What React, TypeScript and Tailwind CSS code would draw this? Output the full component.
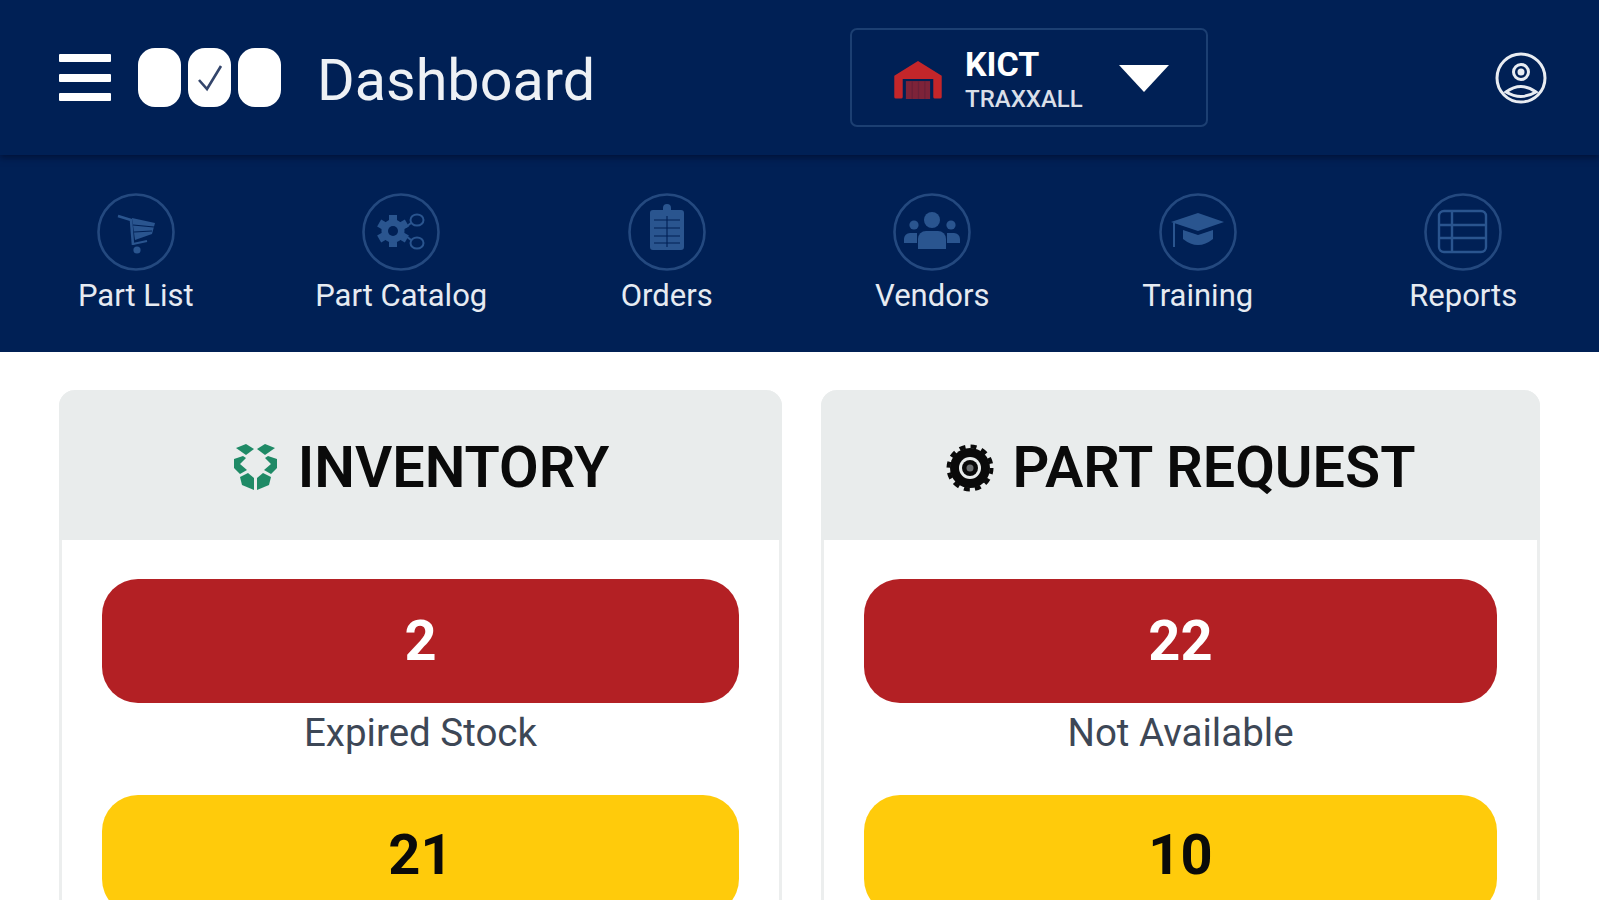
import React from 'react';

const NAVY = '#002055';
const ICON = '#2a558f';

const CartIcon = () => (
  <g>
    <path d="M21 23 L34 27 L36 52" fill="none" stroke={ICON} strokeWidth="2.6" />
    <path d="M35 25 L58 30 L55 41 L38 47Z" fill={ICON} />
    <path d="M36 32 L57 34 M37 39 L55 38" stroke={NAVY} strokeWidth="1.2" />
    <path d="M36 51 L50 48" stroke={ICON} strokeWidth="2" />
    <circle cx="40" cy="57" r="3.6" fill={ICON} />
  </g>
);

const CatalogIcon = () => (
  <g>
    {[0, 60, 120, 180, 240, 300].map((deg) => (
      <rect key={deg} x="27" y="22" width="8" height="8" fill={ICON} transform={`rotate(${deg} 31 38)`} />
    ))}
    <circle cx="31" cy="38" r="11.5" fill={ICON} />
    <circle cx="31" cy="38" r="5" fill={NAVY} />
    <ellipse cx="55" cy="27" rx="6.5" ry="5.5" fill="none" stroke={ICON} strokeWidth="2" />
    <ellipse cx="55" cy="50" rx="6.5" ry="5.5" fill="none" stroke={ICON} strokeWidth="2" />
    <path d="M44 34 L49 30 M44 43 L49 47" stroke={ICON} strokeWidth="2" />
  </g>
);

const OrdersIcon = () => (
  <g>
    <path d="M35 17 V15 a4 4 0 0 1 8 0 V17 H53 a3 3 0 0 1 3 3 V54 a3 3 0 0 1 -3 3 H25 a3 3 0 0 1 -3 -3 V20 a3 3 0 0 1 3 -3Z" fill={ICON} />
    <path d="M26 27 H52 M26 35 H52 M26 43 H52 M26 50 H52 M39 23 V54" stroke={NAVY} strokeWidth="1.1" />
  </g>
);

const VendorsIcon = () => (
  <g fill={ICON}>
    <circle cx="39" cy="27" r="8" />
    <path d="M25 56 V46 a8 8 0 0 1 8 -8 H45 a8 8 0 0 1 8 8 V56Z" />
    <circle cx="21" cy="32" r="4.6" />
    <circle cx="58" cy="32" r="4.6" />
    <path d="M11 50 V46 a6 6 0 0 1 6 -6 H24 V50Z M67 50 V46 a6 6 0 0 0 -6 -6 H54 V50Z" />
  </g>
);

const TrainingIcon = () => (
  <g>
    <path d="M39 20 L65 29 L39 38 L12 29Z" fill={ICON} />
    <path d="M24 37 L39 42 L54 37 V46 Q39 58 24 46Z" fill={ICON} />
    <path d="M15 30 V54" stroke={ICON} strokeWidth="2" />
  </g>
);

const ReportsIcon = () => (
  <g fill="none" stroke={ICON} strokeWidth="2.4">
    <rect x="15" y="18" width="47" height="41" rx="5" />
    <path d="M28 18 V59 M15 32 H62 M15 45 H62" />
  </g>
);

const navItems = [
  { label: 'Part List', icon: <CartIcon /> },
  { label: 'Part Catalog', icon: <CatalogIcon /> },
  { label: 'Orders', icon: <OrdersIcon /> },
  { label: 'Vendors', icon: <VendorsIcon /> },
  { label: 'Training', icon: <TrainingIcon /> },
  { label: 'Reports', icon: <ReportsIcon /> },
];

const cards = [
  { title: 'INVENTORY', icon: 'box', red: '2', label: 'Expired Stock', yellow: '21' },
  { title: 'PART REQUEST', icon: 'gear', red: '22', label: 'Not Available', yellow: '10' },
];

const BoxIcon = () => (
  <svg width="47" height="47" viewBox="0 0 47 47" className="shrink-0">
    <g fill="#1f8a66">
      <path d="M4 4 L14 0 L22 5 L14 11Z" />
      <path d="M43 4 L33 0 L25 5 L33 11Z" />
      <path d="M2 15 L11 12 L14 14 L8 20 L15 26 L8 30 L2 24Z" />
      <path d="M45 15 L36 12 L33 14 L39 20 L32 26 L39 30 L45 24Z" />
      <path d="M8 33 L16 29 L22 34 L22 46 L10 41Z" />
      <path d="M39 33 L31 29 L25 34 L25 46 L37 41Z" />
    </g>
  </svg>
);

const CogIcon = () => (
  <svg width="48" height="48" viewBox="0 0 48 48" className="shrink-0">
    <circle cx="24" cy="24" r="21.5" fill="none" stroke="#0a0a0a" strokeWidth="4" strokeDasharray="6 5.25" />
    <circle cx="24" cy="24" r="20" fill="#0a0a0a" />
    <circle cx="24" cy="24" r="11" fill="#e9ecec" />
    <circle cx="24" cy="24" r="8" fill="#0a0a0a" />
    <circle cx="24" cy="24" r="3.5" fill="#6b6e70" />
  </svg>
);

export default function App() {
  return (
    <div className="h-[900px] overflow-hidden bg-white font-['Roboto',sans-serif]">
      {/* top bar */}
      <div className="h-[155px] bg-[#002055] flex items-center pl-[59px] pr-[52px] shadow-[0_3px_6px_rgba(0,10,40,0.6)] relative z-10">
        <div className="w-[52px] h-[47px] flex flex-col justify-between shrink-0">
          <div className="h-[8px] bg-white rounded-[1px]" />
          <div className="h-[8px] bg-white rounded-[1px]" />
          <div className="h-[8px] bg-white rounded-[1px]" />
        </div>
        <div className="ml-[27px] flex gap-[7px] shrink-0">
          <div className="w-[43px] h-[59px] bg-white rounded-[17px]" />
          <div className="w-[43px] h-[59px] bg-white rounded-[17px] flex items-center justify-center">
            <svg width="26" height="28" viewBox="0 0 26 28">
              <path d="M2 16 L10 25 L24 2" fill="none" stroke="#33456b" strokeWidth="2.6" />
            </svg>
          </div>
          <div className="w-[43px] h-[59px] bg-white rounded-[17px]" />
        </div>
        <div className="ml-[36px] mt-[6px] text-[57.5px] leading-none text-[#eef1f5] w-[276px] shrink-0">Dashboard</div>
        <div className="ml-[257px] w-[358px] h-[99px] border-[2px] border-[#1c3f72] rounded-[7px] flex items-center pl-[41px] shrink-0">
          <svg width="50" height="39" viewBox="0 0 47 37" className="shrink-0 mt-[3px]">
            <path d="M23.5 1 L46 15 V35 a1.5 1.5 0 0 1 -1.5 1.5 H39.5 a1.5 1.5 0 0 1 -1.5 -1.5 V18 H9 V35 a1.5 1.5 0 0 1 -1.5 1.5 H2.5 a1.5 1.5 0 0 1 -1.5 -1.5 V15Z" fill="#c4262a" />
            <rect x="12" y="20" width="23" height="17" fill="#7d2339" />
            <path d="M18 20 V37 M24 20 V37 M30 20 V37" stroke="#6b2038" strokeWidth="1.2" />
          </svg>
          <div className="ml-[22px] w-[154px] shrink-0 mt-[3px]">
            <div className="text-[34px] leading-[34px] font-bold text-white">KICT</div>
            <div className="text-[24px] leading-[26px] mt-[5px] font-medium text-[#d9dfe8]">TRAXXALL</div>
          </div>
          <svg width="50" height="27" viewBox="0 0 50 27" className="shrink-0 mt-[2px]">
            <path d="M0 0 H50 L25 27Z" fill="#ffffff" />
          </svg>
        </div>
        <svg width="52" height="52" viewBox="0 0 52 52" className="ml-auto shrink-0" fill="none" stroke="#e8ecf2" strokeWidth="3">
          <circle cx="26" cy="26" r="24" />
          <circle cx="26" cy="20" r="7.5" />
          <circle cx="26" cy="20" r="2" fill="#e8ecf2" />
          <path d="M11 40 Q26 29 41 40 Q26 49 11 40Z" />
        </svg>
      </div>

      {/* shortcuts */}
      <div className="h-[197px] bg-[#002055] grid grid-cols-6 px-[3px] pt-[38px]">
        {navItems.map((item) => (
          <div key={item.label} className="flex flex-col items-center">
            <svg width="78" height="78" viewBox="0 0 78 78">
              <circle cx="39" cy="39" r="37.5" fill="none" stroke="#24497f" strokeWidth="2.6" />
              {item.icon}
            </svg>
            <div className="mt-[7px] text-[31px] leading-[36px] text-[#e6ebf2]">{item.label}</div>
          </div>
        ))}
      </div>

      {/* cards */}
      <div className="grid grid-cols-[723px_719px] gap-[39px] pl-[59px] pt-[38px]">
        {cards.map((card) => (
          <div key={card.title} className="rounded-t-[16px] border-x-[3px] border-[#eceeee]">
            <div className="h-[150px] bg-[#e9ecec] -mx-[3px] rounded-t-[16px] pt-[5px] flex items-center justify-center gap-[19px]">
              {card.icon === 'box' ? <BoxIcon /> : <CogIcon />}
              <div className="text-[57.5px] leading-none font-semibold text-[#0a0a0a]">{card.title}</div>
            </div>
            <div className="px-[40px] pt-[39px]">
              <div className="h-[124px] rounded-[36px] bg-[#b32024] flex items-center justify-center text-[56px] font-bold text-white">{card.red}</div>
              <div className="mt-[8px] h-[44px] flex items-center justify-center text-[38.5px] text-[#3d4756]">{card.label}</div>
              <div className="mt-[40px] h-[120px] rounded-[36px] bg-[#ffcb0b] flex items-center justify-center text-[56px] font-bold text-[#0a0a0a]">{card.yellow}</div>
            </div>
          </div>
        ))}
      </div>
    </div>
  );
}
